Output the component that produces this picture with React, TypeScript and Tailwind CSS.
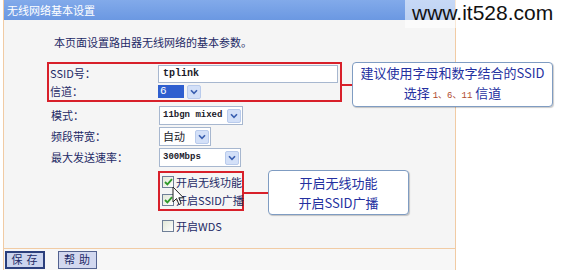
import React from "react";

const cjk = "font-['Noto_Sans_CJK_SC','Noto_Sans',sans-serif]";
const mono = "font-['Liberation_Mono','Noto_Sans_CJK_SC',monospace]";

function Arrow() {
  return (
    <span className="flex h-[14px] w-[14px] shrink-0 items-center justify-center rounded-[2px] border border-[#b9cbec] bg-[#d3e0f8]">
      <svg width="8" height="6" viewBox="0 0 8 6">
        <path d="M1 1.2 L4 4.4 L7 1.2" fill="none" stroke="#3a5fb0" strokeWidth="1.6" />
      </svg>
    </span>
  );
}

function Select({ width, text, cn }: { width: string; text: string; cn?: boolean }) {
  return (
    <div className={`flex h-[19px] ${width} items-center justify-between border border-[#a7b7cf] bg-white pl-[3px] pr-[1px]`}>
      <span className={`whitespace-nowrap leading-none text-[#1a1a2a] ${cn ? cjk + " text-[11px]" : mono + " text-[9px] font-bold"}`}>{text}</span>
      <Arrow />
    </div>
  );
}

function Check({ checked, label }: { checked?: boolean; label: string }) {
  return (
    <div className="flex items-center gap-[2px] whitespace-nowrap">
      <span className="flex h-[12px] w-[12px] shrink-0 items-center justify-center border border-[#6f7f97] bg-gradient-to-br from-[#e2e8d8] to-[#fdfdfd]">
        {checked && (
          <svg width="9" height="8" viewBox="0 0 9 8">
            <path d="M1 4 L3.4 6.4 L8 1.2" fill="none" stroke="#2f9a2a" strokeWidth="1.8" />
          </svg>
        )}
      </span>
      <span className={`whitespace-nowrap text-[11px] leading-none text-[#1e2a66] ${cjk}`}>{label}</span>
    </div>
  );
}

function Row({ label, children, h = "h-[21px]" }: { label: string; children: React.ReactNode; h?: string }) {
  return (
    <div className={`flex ${h} items-center`}>
      <span className={`w-[109px] shrink-0 whitespace-nowrap pl-[1px] text-[11px] leading-none text-[#1e2a66] ${cjk}`}>{label}</span>
      {children}
    </div>
  );
}

export default function App() {
  return (
    <div className="relative flex h-[270px] w-[561px] overflow-hidden bg-white">
      {/* router settings panel */}
      <div className="ml-[3px] flex h-full w-[453px] flex-col border-x border-[#f1cba4] bg-[#f5f5f5]">
        <div className={`flex h-[20px] items-center bg-gradient-to-b from-[#82aaea] to-[#6b98e2] pl-[3px] text-[11px] text-white ${cjk}`}>
          无线网络基本设置
        </div>

        <div className="flex flex-1 flex-col border-b border-[#f1cba4] pl-[43px]">
          <p className={`mt-[14px] h-[16px] whitespace-nowrap pl-[7px] text-[11px] leading-[16px] text-[#1e2a66] ${cjk}`}>
            本页面设置路由器无线网络的基本参数。
          </p>

          <div className="mt-[12px] w-[295px] border-2 border-[#d8202a]">
            <Row label="SSID号：" h="h-[19px]">
              <div className={`flex h-[18px] w-[180px] items-center border border-[#a7b7cf] bg-white pl-[4px] text-[10px] font-bold text-[#1a1a2a] ${mono}`}>
                tplink
              </div>
            </Row>
            <Row label="信道：" h="h-[17px]">
              <div className="flex h-[15px] w-[44px] items-center justify-between pr-[1px]">
                <span className={`flex h-[13px] w-[26px] items-center bg-[#2f5fcf] pl-[2px] text-[11px] leading-none text-white ${mono}`}>6</span>
                <Arrow />
              </div>
            </Row>
          </div>

          <div className="mt-[3px] pl-[3px]">
            <Row label="模式：">
              <Select width="w-[84px]" text="11bgn mixed" />
            </Row>
            <Row label="频段带宽：">
              <Select width="w-[52px]" text="自动" cn />
            </Row>
            <Row label="最大发送速率：">
              <Select width="w-[82px]" text="300Mbps" />
            </Row>
          </div>

          <div className="ml-[111px] mt-[3px] flex h-[40px] w-[86px] flex-col justify-center border-2 border-[#d8202a] pl-[2px]">
            <div className="flex h-[18px] items-center">
              <Check checked label="开启无线功能" />
            </div>
            <div className="flex h-[18px] items-center">
              <Check checked label="开启SSID广播" />
            </div>
          </div>
          <div className="ml-[115px] mt-[5px] flex h-[20px] items-center">
            <Check label="开启WDS" />
          </div>
        </div>

        <div className="flex h-[21px] items-center gap-[13px] bg-[#f7f7f7] pl-[1px]">
          <button className={`flex h-[18px] w-[40px] items-center justify-center border-2 border-[#2b3f7c] bg-[#cbd4ee] pl-[3px] text-[11px] tracking-[4px] text-[#1e2a66] ${cjk}`}>
            保存
          </button>
          <button className={`flex h-[18px] w-[39px] items-center justify-center border border-[#53628f] bg-[#d2d8ef] pl-[3px] text-[11px] tracking-[4px] text-[#1e2a66] ${cjk}`}>
            帮助
          </button>
        </div>
      </div>

      {/* annotation: SSID / channel */}
      <div className="absolute left-[342px] top-[84px] h-[2px] w-[10px] bg-[#d8202a]" />
      <div className={`absolute left-[352px] top-[62px] flex h-[45px] w-[201px] flex-col items-center justify-center rounded-[4px] border border-[#7f9cc2] bg-white leading-[20px] text-[#2430a0] shadow-[1px_1px_1px_rgba(0,0,0,0.2)] ${cjk}`}>
        <span className="whitespace-nowrap text-[13px]">建议使用字母和数字结合的SSID</span>
        <span className="whitespace-nowrap text-[13px]">
          选择 <span className={`text-[9px] text-[#b04a2c] ${mono}`}>1、6、11</span> 信道
        </span>
      </div>

      {/* annotation: wireless / broadcast */}
      <div className="absolute left-[244px] top-[192px] h-[2px] w-[24px] bg-[#d8202a]" />
      <div className={`absolute left-[268px] top-[170px] flex h-[45px] w-[141px] flex-col items-center justify-center rounded-[4px] border border-[#7f9cc2] bg-white text-[13px] leading-[20px] text-[#2430a0] shadow-[1px_1px_1px_rgba(0,0,0,0.2)] ${cjk}`}>
        <span className="whitespace-nowrap">开启无线功能</span>
        <span className="whitespace-nowrap">开启SSID广播</span>
      </div>

      {/* mouse pointer */}
      <svg className="absolute left-[172px] top-[186px]" width="13" height="20" viewBox="0 0 13 20">
        <path d="M1 1 L1 16 L4.5 12.5 L7 18.5 L9.2 17.5 L6.8 11.8 L11.5 11.8 Z" fill="#fff" stroke="#222" strokeWidth="1" strokeLinejoin="round" />
      </svg>

      {/* watermark */}
      <div className="absolute left-[405px] top-0 h-[28px] w-[156px] bg-white/55" />
      <span className="absolute left-[412px] top-[1px] font-['Liberation_Sans',Arial,sans-serif] text-[21px] leading-[24px] text-[#111]">
        www.it528.com
      </span>
    </div>
  );
}
